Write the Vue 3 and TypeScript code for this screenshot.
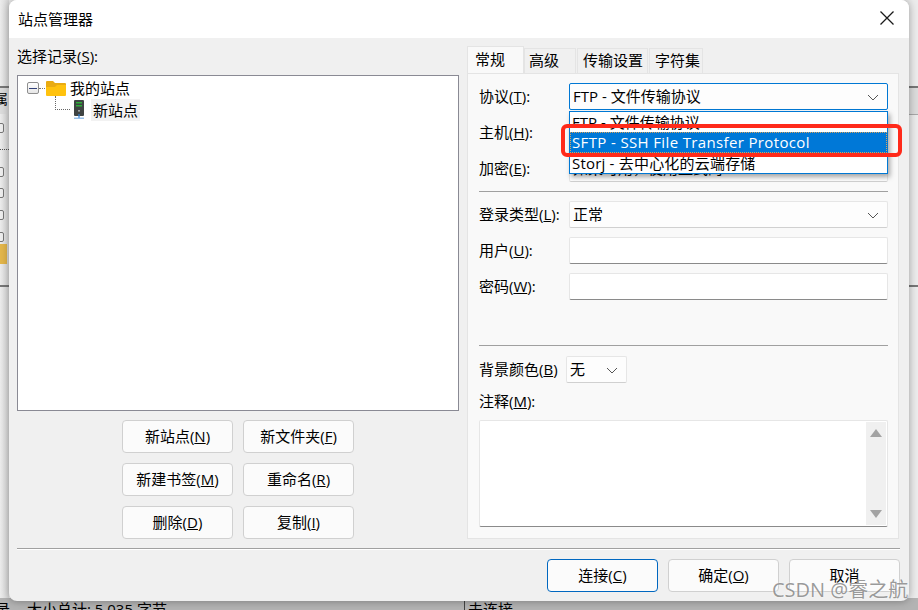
<script setup lang="ts">
const siteButtons = [
  { label: '新站点(', key: 'N' },
  { label: '新文件夹(', key: 'F' },
  { label: '新建书签(', key: 'M' },
  { label: '重命名(', key: 'R' },
  { label: '删除(', key: 'D' },
  { label: '复制(', key: 'I' },
]
const tabs = ['高级', '传输设置', '字符集']
const backdropToggles = [123, 167, 188, 210, 232]
</script>

<template>
  <div class="desk">
    <div class="behind">
      <div class="band band-l"></div>
      <div class="band band-r"></div>
      <div class="rule rule-a"></div>
      <div class="rule rule-b"></div>
      <div class="rule-r rule-a"></div>
      <div class="rule-r rule-b"></div>
      <span class="cut">属</span>
      <span
        v-for="y in backdropToggles"
        :key="y"
        class="peek"
        :style="{ top: y + 'px' }"
      ></span>
      <span class="peek-line"></span>
      <span class="peek-folder"></span>
      <div class="statusbar">
        <span class="st-a">录</span>
        <span class="st-b">大小总计: 5,035 字节</span>
        <i class="st-line"></i>
        <span class="st-c">未连接</span>
      </div>
    </div>

    <section class="dialog">
      <header class="titlebar">
        <span>站点管理器</span>
        <svg class="close" width="16" height="16" viewBox="0 0 16 16">
          <path d="M1.5 1.5 14.5 14.5M14.5 1.5 1.5 14.5" stroke="#1a1a1a" stroke-width="1.3" fill="none" />
        </svg>
      </header>

      <div class="body">
        <div class="main">
          <div class="left">
            <div class="left-label">选择记录(<u>S</u>):</div>
            <div class="tree">
              <div class="node node-root">
                <span class="minus"><i></i></span>
                <span class="dots-h"></span>
                <svg class="folder" width="21" height="17" viewBox="0 0 21 17">
                  <path d="M0 2a1 1 0 0 1 1-1h6l2 2h10a1 1 0 0 1 1 1v3H0z" fill="#e9ab12" />
                  <path d="M0 7h9l2-2h9v10a1 1 0 0 1-1 1H1a1 1 0 0 1-1-1z" fill="#ffc20e" />
                </svg>
                <span class="node-text">我的站点</span>
              </div>
              <div class="node node-child">
                <span class="elbow"></span>
                <svg class="server" width="12" height="20" viewBox="0 0 12 20">
                  <rect x="1" y="0" width="10" height="16" rx="1" fill="#3f4443" />
                  <rect x="3" y="2" width="6" height="1.5" fill="#2fae3a" />
                  <rect x="3" y="5" width="6" height="1.5" fill="#2fae3a" />
                  <rect x="5.2" y="10" width="1.6" height="1.6" fill="#b9bdbc" />
                  <rect x="5.4" y="14" width="1.2" height="4" fill="#2b7cd3" />
                  <rect x="1" y="17.6" width="10" height="1.2" fill="#7fb2e5" />
                </svg>
                <span class="node-text selected">新站点</span>
              </div>
            </div>
            <div class="site-buttons">
              <button v-for="b in siteButtons" :key="b.key" class="btn" type="button">
                {{ b.label }}<u>{{ b.key }}</u>)
              </button>
            </div>
          </div>

          <div class="right">
            <div class="tabbar">
              <span class="tab active">常规</span>
              <span v-for="t in tabs" :key="t" class="tab">{{ t }}</span>
            </div>
            <div class="panel">
              <div class="rows">
                <div class="row">
                  <label>协议(<u>T</u>):</label>
                  <div class="field combo focus">
                    <span>FTP - 文件传输协议</span>
                    <svg class="chev" width="12" height="7" viewBox="0 0 12 7"><path d="M1 1l5 5 5-5" fill="none" stroke="#555" stroke-width="1" /></svg>
                    <ul class="popup">
                      <li>FTP - 文件传输协议</li>
                      <li class="hot">SFTP - SSH File Transfer Protocol</li>
                      <li class="storj">Storj - 去中心化的云端存储</li>
                    </ul>
                  </div>
                </div>
                <div class="row">
                  <label>主机(<u>H</u>):</label>
                  <div class="field input"></div>
                </div>
                <div class="row">
                  <label>加密(<u>E</u>):</label>
                  <div class="field combo"><span>如果可用，使用显式的 FTP over TLS</span></div>
                </div>
              </div>

              <div class="sep sep-1"></div>

              <div class="rows">
                <div class="row">
                  <label>登录类型(<u>L</u>):</label>
                  <div class="field combo">
                    <span>正常</span>
                    <svg class="chev" width="12" height="7" viewBox="0 0 12 7"><path d="M1 1l5 5 5-5" fill="none" stroke="#555" stroke-width="1" /></svg>
                  </div>
                </div>
                <div class="row">
                  <label>用户(<u>U</u>):</label>
                  <div class="field input"></div>
                </div>
                <div class="row">
                  <label>密码(<u>W</u>):</label>
                  <div class="field input"></div>
                </div>
              </div>

              <div class="sep sep-2"></div>

              <div class="row bg-row">
                <label>背景颜色(<u>B</u>)</label>
                <div class="field combo small">
                  <span>无</span>
                  <svg class="chev" width="12" height="7" viewBox="0 0 12 7"><path d="M1 1l5 5 5-5" fill="none" stroke="#555" stroke-width="1" /></svg>
                </div>
              </div>
              <div class="note-label">注释(<u>M</u>):</div>
              <div class="note">
                <div class="scroll">
                  <svg width="12" height="8" viewBox="0 0 12 8"><path d="M6 0l6 8H0z" fill="#a3a3a3" /></svg>
                  <svg width="12" height="8" viewBox="0 0 12 8"><path d="M6 8L0 0h12z" fill="#a3a3a3" /></svg>
                </div>
              </div>
            </div>
          </div>
        </div>

        <div class="bottom-sep"></div>

        <footer class="footer">
          <button class="btn primary" type="button">连接(<u>C</u>)</button>
          <button class="btn" type="button">确定(<u>O</u>)</button>
          <button class="btn" type="button">取消</button>
        </footer>
      </div>
    </section>

    <div class="annotation"></div>
    <div class="watermark">CSDN @睿之航</div>
  </div>
</template>

<style>
html, body { margin: 0; padding: 0; }
</style>

<style scoped>
.desk {
  position: relative;
  width: 918px;
  height: 610px;
  overflow: hidden;
  background: #ececec;
  font-family: "Open Sans", "Noto Sans CJK SC", sans-serif;
  font-size: 15px;
  color: #000;
}
.behind { position: absolute; inset: 0; }
.behind::before {
  content: "";
  position: absolute;
  left: 0;
  top: 0;
  width: 9px;
  height: 610px;
  background: linear-gradient(90deg, #ececec, #d8d8d8);
}
.band { position: absolute; top: 88px; width: 9px; height: 26px; background: #dcdcdc; }
.band-l { left: 0; }
.band-r { right: 0; border-bottom: 1px solid #a8a8a8; }
.rule { position: absolute; left: 0; width: 9px; height: 2px; background: #777; }
.rule-r { position: absolute; right: 0; width: 9px; height: 2px; background: #777; }
.rule-a { top: 86px; }
.rule-b { top: 285px; }
.cut { position: absolute; left: -6px; top: 90px; font-size: 14px; line-height: 18px; }
.peek {
  position: absolute;
  left: -8px;
  width: 10px;
  height: 8px;
  border: 1px solid #777;
  border-radius: 2px;
  background: #eee;
}
.peek-line { position: absolute; left: 0; top: 149px; width: 9px; border-top: 1px dotted #555; }
.peek-folder { position: absolute; left: 0; top: 244px; width: 7px; height: 20px; background: #e3b64a; }
.statusbar {
  position: absolute;
  left: 0;
  right: 0;
  top: 598px;
  height: 12px;
  background: #b3b3b3;
  font-size: 15px;
  line-height: 22px;
  white-space: nowrap;
}
.statusbar span { position: absolute; top: 0; }
.st-a { left: -5px; }
.st-b { left: 27px; }
.st-c { left: 468px; }
.st-line { position: absolute; left: 464px; top: 0; bottom: 0; width: 1px; background: #444; }

.dialog {
  position: absolute;
  left: 9px;
  top: 0;
  width: 900px;
  height: 601px;
  display: flex;
  flex-direction: column;
  background: #f0f0f0;
  border-radius: 8px;
  box-shadow: 0 0 8px rgba(0, 0, 0, 0.35);
  overflow: hidden;
}
.titlebar {
  flex: none;
  box-sizing: border-box;
  height: 38px;
  background: #fff;
  display: flex;
  align-items: center;
  justify-content: space-between;
  padding: 0 14px 2px 9px;
}
.close { display: block; }
.body { flex: 1; display: flex; flex-direction: column; padding: 0 9px 0 8px; }
.main { display: flex; height: 501px; flex: none; }
.left { width: 442px; flex: none; display: flex; flex-direction: column; }
.left-label { height: 37px; line-height: 37px; }
.tree {
  box-sizing: border-box;
  height: 336px;
  background: #fff;
  border: 1px solid #8a8a94;
  padding-top: 1px;
}
.node { position: relative; display: flex; align-items: center; height: 22px; }
.node-root { padding-left: 9px; }
.minus {
  box-sizing: border-box;
  width: 12px;
  height: 12px;
  border: 1px solid #8f8f8f;
  border-radius: 2px;
  background: linear-gradient(#fff, #e6e6e6);
  display: flex;
  align-items: center;
  justify-content: center;
}
.minus i { display: block; width: 8px; height: 1px; background: #33427a; }
.dots-h { width: 6px; border-top: 1px dotted #777; margin-right: 1px; }
.folder { margin-right: 3px; }
.node-text { line-height: 22px; }
.node-child { padding-left: 55px; }
.elbow {
  position: absolute;
  left: 37px;
  top: -3px;
  width: 14px;
  height: 13px;
  border-left: 1px dotted #666;
  border-bottom: 1px dotted #666;
}
.server { margin-right: 6px; }
.selected { background: #f2f2f2; padding: 0 2px; }
.site-buttons {
  display: grid;
  grid-template-columns: 111px 111px;
  grid-auto-rows: 33px;
  gap: 10px;
  justify-content: center;
  padding-top: 9px;
}
.btn {
  box-sizing: border-box;
  width: 111px;
  height: 33px;
  padding: 0 0 2px;
  background: #fbfbfb;
  border: 1px solid #d0d0d0;
  border-radius: 4px;
  font: inherit;
  color: #000;
  text-align: center;
}
.right { width: 432px; flex: none; margin-left: 8px; padding-top: 8px; display: flex; flex-direction: column; }
.tabbar { display: flex; height: 27px; align-items: flex-end; }
.tab {
  box-sizing: border-box;
  height: 25px;
  line-height: 23px;
  padding: 0 0 0 5px;
  border: 1px solid #e4e4e4;
  border-bottom: none;
  margin-right: 1px;
  background: #f0f0f0;
  white-space: nowrap;
}
.tab.active { height: 27px; line-height: 24px; width: 57px; margin-right: 0; padding: 0 0 0 7px; background: #f9f9f9; }
.tab:nth-child(2) { width: 52px; padding-left: 4px; }
.tab:nth-child(3) { width: 71px; }
.tab:nth-child(4) { width: 54px; }
.panel {
  box-sizing: border-box;
  height: 466px;
  background: #f9f9f9;
  border: 1px solid #e4e4e4;
  padding: 9px 10px 0 11px;
}
.rows { display: flex; flex-direction: column; gap: 9px; }
.row { display: flex; align-items: center; height: 27px; }
.row label { width: 90px; flex: none; white-space: nowrap; padding-bottom: 2px; }
.field {
  box-sizing: border-box;
  position: relative;
  flex: 1;
  height: 27px;
  background: #fff;
  border: 1px solid #e6e6e6;
  border-radius: 2px;
}
.combo {
  display: flex;
  align-items: center;
  padding-left: 3px;
  white-space: nowrap;
  background: #fdfdfd;
  border-bottom-color: #d0d0d0;
}
.combo > span { padding-bottom: 2px; }
.input { border-bottom: 1px solid #8a8a8a; }
.focus { border-color: #0078d4; z-index: 2; }
.chev { position: absolute; right: 8px; top: 10px; }
.popup {
  position: absolute;
  left: -1px;
  right: -1px;
  top: 27px;
  margin: 0;
  padding: 0;
  list-style: none;
  background: #fff;
  border: 1px solid #0078d4;
  box-shadow: 2px 3px 5px rgba(0, 0, 0, 0.35);
}
.popup li { height: 20px; line-height: 20px; padding-left: 2px; }
.popup .hot {
  height: 21px;
  box-sizing: border-box;
  background: #0078d7;
  color: #fff;
  letter-spacing: 0.36px;
  outline: 1px dotted #d8a25c;
  outline-offset: -1px;
}
.storj { letter-spacing: 0.2px; }
.sep { height: 1px; background: #a0a0a0; }
.sep-1 { margin: 9px 0 9px; }
.sep-2 { margin: 45px 0 10px; }
.bg-row label { width: 87px; }
.small { flex: none; width: 61px; }
.note-label { margin-top: 8px; height: 29px; line-height: 20px; }
.note {
  box-sizing: border-box;
  position: relative;
  height: 107px;
  background: #fff;
  border: 1px solid #e6e6e6;
  border-bottom: 1px solid #8a8a8a;
  border-radius: 2px;
}
.scroll {
  position: absolute;
  right: 1px;
  top: 1px;
  bottom: 1px;
  width: 20px;
  background: #f0f0f0;
  display: flex;
  flex-direction: column;
  align-items: center;
  justify-content: space-between;
  padding: 7px 0;
  box-sizing: border-box;
}
.scroll svg { display: block; }
.bottom-sep {
  flex: none;
  margin-top: 9px;
  height: 1px;
  background: #a0a0a0;
  box-shadow: 0 1px 0 #fff;
}
.footer { display: flex; justify-content: flex-end; gap: 10px; padding-top: 10px; }
.primary { border: 1px solid #0067c0; }
.annotation {
  position: absolute;
  z-index: 3;
  left: 561px;
  top: 124px;
  width: 341px;
  height: 33px;
  box-sizing: border-box;
  border: 4px solid #ff2a1a;
  border-radius: 6px;
}
.watermark {
  position: absolute;
  z-index: 3;
  left: 772px;
  top: 577px;
  font-size: 20px;
  line-height: 26px;
  white-space: nowrap;
  color: rgba(110, 110, 110, 0.7);
  text-shadow: 0 0 2px rgba(255, 255, 255, 0.9);
}
</style>
